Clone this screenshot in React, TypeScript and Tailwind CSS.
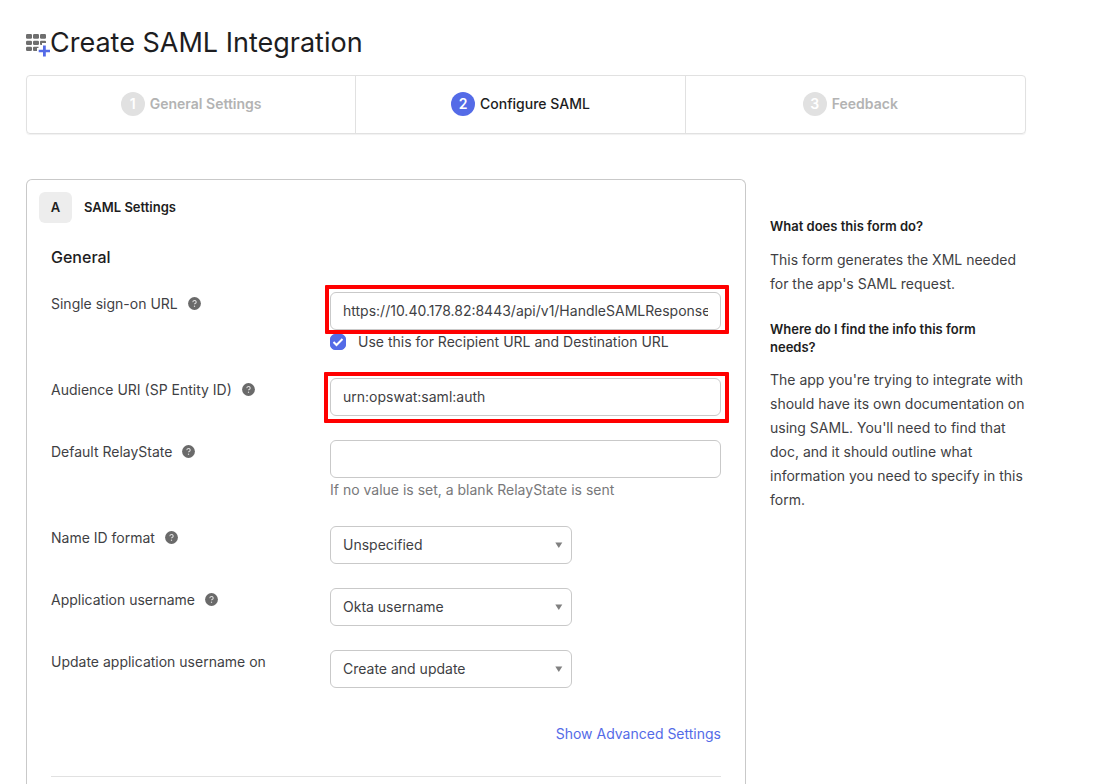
import type { ReactNode } from "react";

function AppGridIcon() {
  return (
    <svg className="h-7 w-6 shrink-0" viewBox="0 -2 24 28" aria-hidden="true">
      <g fill="#6e6e6e">
        <rect x="0" y="3" width="6" height="4.800" rx="1.200" />
        <rect x="7" y="3" width="6" height="4.800" rx="1.200" />
        <rect x="14" y="3" width="6" height="4.800" rx="1.200" />
        <rect x="0" y="9.800" width="6" height="4.200" rx="1.200" />
        <rect x="7" y="9.800" width="6" height="4.200" rx="1.200" />
        <path d="M15 9.800h4a1 1 0 0 1 1 1v1.200h-4v2h-1a1 1 0 0 1-1-1v-2.200a1 1 0 0 1 1-1z" />
        <rect x="0" y="15.800" width="6" height="4.200" rx="1.200" />
        <path d="M8 15.800h4.500v1.200h-1.500v3H8a1 1 0 0 1-1-1v-2.200a1 1 0 0 1 1-1z" />
      </g>
      <path d="M17 14.400h2.800v4.300H24v2.600h-4.200v4.300H17v-4.300h-4.300v-2.600H17z" fill="#546be7" />
    </svg>
  );
}

function HelpButton({ topic }: { topic: string }) {
  return (
    <button type="button" aria-label={`Help: ${topic}`} className="flex size-[13px] shrink-0">
      <svg viewBox="0 0 13 13" className="size-[13px]" aria-hidden="true">
        <circle cx="6.500" cy="6.500" r="6.400" fill="#6a6a6a" />
        <path d="M4.900 5.100a1.650 1.500 0 1 1 2.300 1.300q-.7.300-.7.900" fill="none" stroke="#dcdcdc" strokeWidth="1.100" />
        <circle cx="6.500" cy="9.200" r=".7" fill="#dcdcdc" />
      </svg>
    </button>
  );
}

function Step({ number, label, active }: { number: number; label: string; active?: boolean }) {
  return (
    <li
      aria-current={active ? "step" : undefined}
      className="flex items-center justify-center gap-[5px] border-r border-[#e1e1e1] pb-px text-sm font-semibold last:border-r-0"
    >
      <span
        className={
          active
            ? "flex size-6 items-center justify-center rounded-full bg-[#546be7] text-white"
            : "flex size-6 items-center justify-center rounded-full bg-[#e1e1e1] text-white"
        }
      >
        {number}
      </span>
      <span className={active ? "font-medium text-[#1d1d21]" : "text-[#b3b3b3]"}>{label}</span>
    </li>
  );
}

function Row({ id, label, help, children }: { id: string; label: string; help?: boolean; children: ReactNode }) {
  return (
    <div className="grid grid-cols-[279px_minmax(0,1fr)]">
      <div className="flex h-6 items-center gap-2.5 pb-px">
        <label htmlFor={id}>{label}</label>
        {help && <HelpButton topic={label} />}
      </div>
      <div>{children}</div>
    </div>
  );
}

function TextField({ id, value }: { id: string; value?: string }) {
  return (
    <input
      id={id}
      type="text"
      defaultValue={value}
      className="block h-[38px] w-full rounded-md border border-[#c9c9c9] bg-white px-3 pb-0.5 outline-none"
    />
  );
}

function SelectField({ id, options }: { id: string; options: string[] }) {
  return (
    <div className="relative w-[242px]">
      <select
        id={id}
        className="block h-[38px] w-full appearance-none rounded-md border border-[#c9c9c9] bg-white pr-8 pl-3 outline-none"
      >
        {options.map((option) => (
          <option key={option}>{option}</option>
        ))}
      </select>
      <svg viewBox="0 0 8 6" className="pointer-events-none absolute top-4 right-[9px] h-1.5 w-2" aria-hidden="true">
        <path d="M.3 .5h7L3.800 6z" fill="#808080" />
      </svg>
    </div>
  );
}

export default function App() {
  return (
    <main className="flex min-h-screen flex-col bg-white px-[26px] pt-[26px] font-['Inter',sans-serif] text-sm leading-6 text-[#3f3f44]">
      <div className="flex w-full max-w-[1000px] grow flex-col">
        <header className="flex items-center">
          <AppGridIcon />
          <h1 className="text-[27px] leading-[34px] font-normal text-[#1d1d21]">Create SAML Integration</h1>
        </header>

        <ol className="mt-[15px] grid h-[59px] grid-cols-[33%_33%_33%] rounded-sm border border-[#e1e1e1] shadow-[0_1px_1px_rgba(0,0,0,0.06)]">
          <Step number={1} label="General Settings" />
          <Step number={2} label="Configure SAML" active />
          <Step number={3} label="Feedback" />
        </ol>

        <div className="mt-[45px] grid grow grid-cols-[minmax(0,720fr)_minmax(0,256fr)] gap-6">
          <form className="rounded-t-md border border-b-0 border-[#c9c9c9] px-6">
            <div className="mt-3 -ml-3 flex items-center gap-3 text-[13px] font-semibold text-[#1d1d21]">
              <span className="flex h-[31px] w-[33px] items-center justify-center rounded-md bg-[#ededed] pb-px">A</span>
              <h2 className="pb-px">SAML Settings</h2>
            </div>
            <h3 className="mt-[22px] text-base font-medium text-[#1d1d21]">General</h3>

            <div className="mt-[23px] flex flex-col gap-6">
              <Row id="sso-url" label="Single sign-on URL" help>
                <div className="relative">
                  <TextField id="sso-url" value="https://10.40.178.82:8443/api/v1/HandleSAMLResponse" />
                  <div className="pointer-events-none absolute -top-[7px] -right-2 -bottom-1 -left-[5px] rounded-[1px] border-4 border-[#ff0000]" />
                </div>
                <label className="flex items-center gap-3">
                  <span className="relative flex">
                    <input
                      type="checkbox"
                      defaultChecked
                      className="peer size-4 appearance-none rounded-[5px] border border-[#8c8c96] checked:border-[#546be7] checked:bg-[#546be7]"
                    />
                    <svg
                      viewBox="0 0 16 16"
                      className="pointer-events-none absolute inset-0 size-4 opacity-0 peer-checked:opacity-100"
                      aria-hidden="true"
                    >
                      <path d="M3.500 8l3 3 6-6" fill="none" stroke="#fff" strokeWidth="2" />
                    </svg>
                  </span>
                  Use this for Recipient URL and Destination URL
                </label>
              </Row>

              <Row id="audience" label="Audience URI (SP Entity ID)" help>
                <div className="relative">
                  <TextField id="audience" value="urn:opswat:saml:auth" />
                  <div className="pointer-events-none absolute -top-1.5 -right-2 -bottom-[7px] -left-1.5 rounded-[1px] border-4 border-[#ff0000]" />
                </div>
              </Row>

              <Row id="relay-state" label="Default RelayState" help>
                <TextField id="relay-state" />
                <p className="text-[#78787a]">If no value is set, a blank RelayState is sent</p>
              </Row>

              <Row id="name-id" label="Name ID format" help>
                <SelectField id="name-id" options={["Unspecified"]} />
              </Row>

              <Row id="app-username" label="Application username" help>
                <SelectField id="app-username" options={["Okta username"]} />
              </Row>

              <Row id="update-on" label="Update application username on">
                <SelectField id="update-on" options={["Create and update"]} />
              </Row>
            </div>

            <div className="mt-[34px] flex justify-end">
              <a href="#advanced" className="text-[#546be7]">
                Show Advanced Settings
              </a>
            </div>
            <hr className="mt-[30px] border-[#e1e1e1]" />
          </form>

          <aside className="pt-[38px]">
            <h2 className="pr-8 text-[13px] leading-[18px] font-semibold text-[#1d1d21]">What does this form do?</h2>
            <p className="mt-[13px]">This form generates the XML needed for the app's SAML request.</p>
            <h2 className="mt-6 pr-8 text-[13px] leading-[18px] font-semibold text-[#1d1d21]">
              Where do I find the info this form needs?
            </h2>
            <p className="mt-3">
              The app you're trying to integrate with should have its own documentation on using SAML. You'll need to
              find that doc, and it should outline what information you need to specify in this form.
            </p>
          </aside>
        </div>
      </div>
    </main>
  );
}
